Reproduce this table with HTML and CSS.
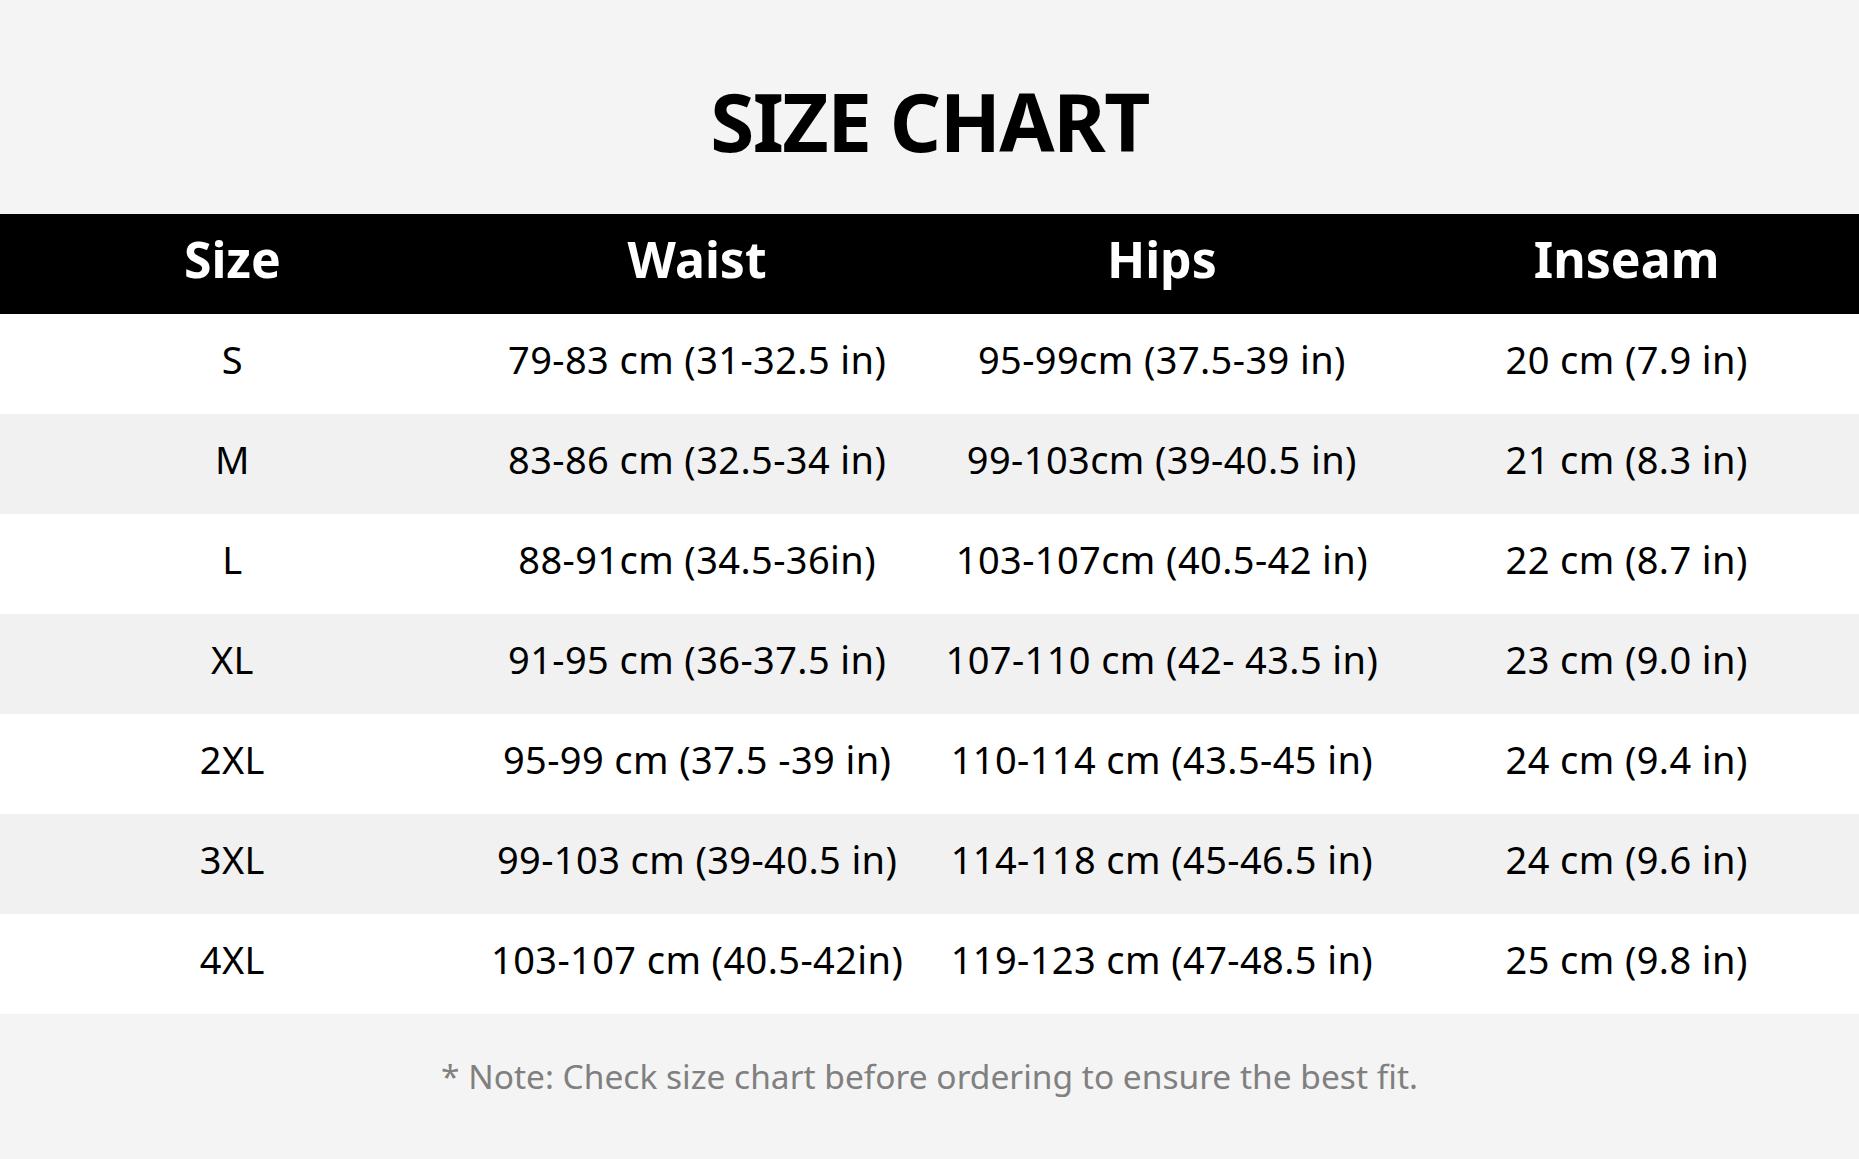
FILE: index.html
```html
<!DOCTYPE html>
<html lang="en">
<head>
<meta charset="utf-8">
<title>Size Chart</title>
<link rel="stylesheet" href="styles.css">
</head>
<body>
<div class="page">
  <h1 class="title">SIZE CHART</h1>
  <div class="table">
    <div class="row head">
      <div class="cell">Size</div>
      <div class="cell">Waist</div>
      <div class="cell">Hips</div>
      <div class="cell">Inseam</div>
    </div>
    <div class="row">
      <div class="cell">S</div>
      <div class="cell">79-83 cm (31-32.5 in)</div>
      <div class="cell">95-99cm (37.5-39 in)</div>
      <div class="cell">20 cm (7.9 in)</div>
    </div>
    <div class="row alt">
      <div class="cell">M</div>
      <div class="cell">83-86 cm (32.5-34 in)</div>
      <div class="cell">99-103cm (39-40.5 in)</div>
      <div class="cell">21 cm (8.3 in)</div>
    </div>
    <div class="row">
      <div class="cell">L</div>
      <div class="cell">88-91cm (34.5-36in)</div>
      <div class="cell">103-107cm (40.5-42 in)</div>
      <div class="cell">22 cm (8.7 in)</div>
    </div>
    <div class="row alt">
      <div class="cell">XL</div>
      <div class="cell">91-95 cm (36-37.5 in)</div>
      <div class="cell">107-110 cm (42- 43.5 in)</div>
      <div class="cell">23 cm (9.0 in)</div>
    </div>
    <div class="row">
      <div class="cell">2XL</div>
      <div class="cell">95-99 cm (37.5 -39 in)</div>
      <div class="cell">110-114 cm (43.5-45 in)</div>
      <div class="cell">24 cm (9.4 in)</div>
    </div>
    <div class="row alt">
      <div class="cell">3XL</div>
      <div class="cell">99-103 cm (39-40.5 in)</div>
      <div class="cell">114-118 cm (45-46.5 in)</div>
      <div class="cell">24 cm (9.6 in)</div>
    </div>
    <div class="row">
      <div class="cell">4XL</div>
      <div class="cell">103-107 cm (40.5-42in)</div>
      <div class="cell">119-123 cm (47-48.5 in)</div>
      <div class="cell">25 cm (9.8 in)</div>
    </div>
  </div>
  <p class="note">* Note: Check size chart before ordering to ensure the best fit.</p>
</div>
</body>
</html>
```

FILE: styles.css
```css
html, body {
  margin: 0;
  padding: 0;
  background: #f4f4f4;
}
.page {
  width: 1859px;
  height: 1159px;
  font-family: "Noto Sans", "Open Sans", sans-serif;
  color: #000;
  background: #f4f4f4;
  display: flex;
  flex-direction: column;
}
.title {
  box-sizing: border-box;
  height: 214px;
  margin: 0;
  padding-top: 81px;
  font-size: 80px;
  line-height: 80px;
  font-weight: 700;
  letter-spacing: -1.5px;
  text-align: center;
}
.table {
  display: flex;
  flex-direction: column;
}
.row {
  display: grid;
  grid-template-columns: repeat(4, 1fr);
  height: 100px;
  background: #ffffff;
  font-size: 38px;
  letter-spacing: 0.4px;
}
.row.alt {
  background: #f1f1f1;
}
.row.head {
  background: #000;
  color: #fff;
  font-size: 50px;
  font-weight: 700;
  letter-spacing: 0;
}
.cell {
  display: flex;
  align-items: center;
  justify-content: center;
  box-sizing: border-box;
  padding-bottom: 11px;
  line-height: 1;
  white-space: nowrap;
}
.note {
  margin: 0;
  padding-top: 45px;
  font-size: 33.5px;
  line-height: 34px;
  color: #808080;
  text-align: center;
}
```
